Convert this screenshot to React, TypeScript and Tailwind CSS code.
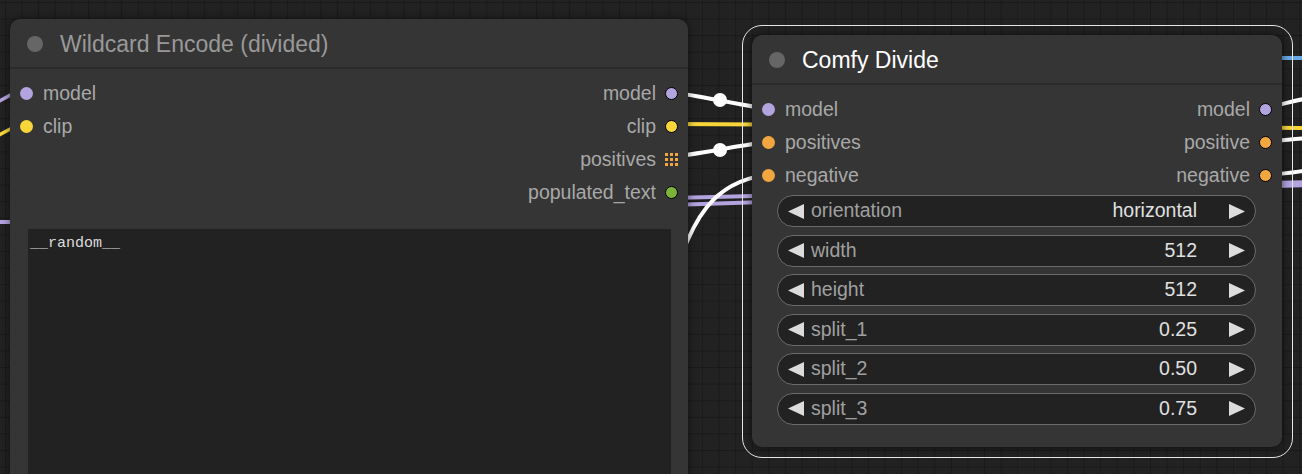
import type { ReactNode } from "react";

const DOT: Record<string, string> = {
  model: "bg-[#b3a3df]",
  clip: "bg-[#f8d63a]",
  cond: "bg-[#f2a63f]",
  text: "bg-[#7db33b]",
};

function InSlot({ label, kind }: { label: string; kind: string }) {
  return (
    <div className="flex h-[33px] items-center gap-[10px] pl-[10px]">
      <span className={`h-[13px] w-[13px] shrink-0 rounded-full ${DOT[kind]}`} />
      <span className="text-[19.5px] leading-none text-[#a8a8a8]">{label}</span>
    </div>
  );
}

function GridIcon() {
  return (
    <svg width="13" height="13" viewBox="0 0 13 13" className="shrink-0">
      {[0, 5, 10].map((y) =>
        [0, 5, 10].map((x) => <rect key={`${x}-${y}`} x={x} y={y} width="3" height="3" fill="#f2a63f" />)
      )}
    </svg>
  );
}

function OutSlot({ label, kind }: { label: string; kind: string }) {
  return (
    <div className="flex h-[33px] items-center justify-end gap-[9px] pr-[10px]">
      <span className="text-[19.5px] leading-none text-[#a8a8a8]">{label}</span>
      {kind === "list" ? (
        <GridIcon />
      ) : (
        <span className={`h-[13px] w-[13px] shrink-0 rounded-full border border-black ${DOT[kind]}`} />
      )}
    </div>
  );
}

function Title({ text, selected }: { text: string; selected?: boolean }) {
  return (
    <div className="flex h-[50px] items-center gap-[17px] border-b-2 border-[#2b2b2b] pl-[17px] pt-[2px]">
      <span className="h-[16px] w-[16px] rounded-full bg-[#666]" />
      <span className={`text-[23px] leading-none ${selected ? "text-white" : "text-[#999]"}`}>{text}</span>
    </div>
  );
}

function Arrow({ dir }: { dir: "l" | "r" }) {
  return (
    <svg width="16" height="15" viewBox="0 0 16 15" className="shrink-0">
      <polygon points={dir === "l" ? "0,7.5 16,0 16,15" : "16,7.5 0,0 0,15"} fill="#dcdcdc" />
    </svg>
  );
}

function Widget({ label, value }: { label: string; value: string }) {
  return (
    <div className="flex h-[32px] items-center rounded-full border border-[#6a6a6a] bg-[#222] pl-[10px] pr-[10px]">
      <Arrow dir="l" />
      <span className="ml-[7px] flex-1 text-[19.5px] leading-none text-[#a0a0a0]">{label}</span>
      <span className="mr-[32px] text-[19.5px] leading-none text-[#e0e0e0]">{value}</span>
      <Arrow dir="r" />
    </div>
  );
}

function Links(): ReactNode {
  return (
    <svg className="absolute inset-0" width="1302" height="474" viewBox="0 0 1302 474">
      <g fill="none" strokeLinecap="round">
        {/* into left node */}
        <path d="M -20 112 L 14 93" stroke="#b3a3df" strokeWidth="3.5" />
        <path d="M -20 145 L 14 127" stroke="#f8d63a" strokeWidth="3.5" />
        <path d="M -20 222 L 14 222" stroke="#b3a3df" strokeWidth="4" />
        {/* between nodes */}
        <path d="M 671 205 L 1310 185" stroke="#b3a3df" strokeWidth="4" />
        <path d="M 671 198 L 1310 182" stroke="#b3a3df" strokeWidth="4" />
        <path d="M 671 124 L 1310 128" stroke="#f8d63a" strokeWidth="4" />
        <path d="M 671 92 C 700 96, 740 105, 769 109" stroke="#fff" strokeWidth="4" />
        <circle cx="720" cy="100" r="7" fill="#fff" />
        <path d="M 671 157 C 700 154, 740 145, 769 142" stroke="#fff" strokeWidth="4" />
        <circle cx="720" cy="150" r="7" fill="#fff" />
        <path d="M 670 292 C 690 217, 715 180, 769 175" stroke="#fff" strokeWidth="4" />
        {/* out of right node */}
        <path d="M 1282 58 L 1310 58" stroke="#6aa8e8" strokeWidth="4" />
        <path d="M 1265 108 C 1285 104, 1295 100, 1310 98" stroke="#fff" strokeWidth="4" />
        <path d="M 1265 142 C 1285 140, 1295 139, 1310 138" stroke="#fff" strokeWidth="4" />
        <path d="M 1265 175 C 1285 174, 1295 172, 1310 170" stroke="#fff" strokeWidth="4" />
      </g>
    </svg>
  );
}

export default function App() {
  return (
    <div
      className="relative h-[474px] w-[1302px] overflow-hidden bg-[#222] bg-[linear-gradient(to_right,#1a1a1a_1px,transparent_1px),linear-gradient(to_bottom,#1a1a1a_1px,transparent_1px)] bg-[size:16.6px_16.6px] bg-[position:5px_2px] font-['Liberation_Sans',Arial,sans-serif]"
    >
      <Links />

      {/* Wildcard Encode (divided) */}
      <div className="absolute left-[10px] top-[19px] flex h-[480px] w-[678px] flex-col rounded-t-[10px] bg-[#353535] shadow-[0_0_8px_rgba(0,0,0,0.55)]">
        <Title text="Wildcard Encode (divided)" />
        <div className="grid grid-cols-2 pt-[8px]">
          <div className="flex flex-col">
            <InSlot label="model" kind="model" />
            <InSlot label="clip" kind="clip" />
          </div>
          <div className="flex flex-col">
            <OutSlot label="model" kind="model" />
            <OutSlot label="clip" kind="clip" />
            <OutSlot label="positives" kind="list" />
            <OutSlot label="populated_text" kind="text" />
          </div>
        </div>
        <div className="ml-[18px] mr-[17px] mt-[20px] flex-1 bg-[#222] px-[2px] pt-[6px] font-['Liberation_Mono',monospace] text-[15px] leading-[18px] text-[#ddd]">
          __random__
        </div>
      </div>

      {/* selection outline */}
      <div className="absolute left-[742px] top-[25px] h-[433px] w-[551px] rounded-[20px] border-[1.5px] border-[#e6e6e6]" />

      {/* Comfy Divide */}
      <div className="absolute left-[752px] top-[35px] flex h-[412px] w-[530px] flex-col rounded-[10px] bg-[#353535] shadow-[0_0_8px_rgba(0,0,0,0.6)]">
        <Title text="Comfy Divide" selected />
        <div className="grid grid-cols-2 pt-[8px]">
          <div className="flex flex-col">
            <InSlot label="model" kind="model" />
            <InSlot label="positives" kind="cond" />
            <InSlot label="negative" kind="cond" />
          </div>
          <div className="flex flex-col">
            <OutSlot label="model" kind="model" />
            <OutSlot label="positive" kind="cond" />
            <OutSlot label="negative" kind="cond" />
          </div>
        </div>
        <div className="ml-[25px] mr-[26px] mt-[3px] flex flex-col gap-[7.5px]">
          <Widget label="orientation" value="horizontal" />
          <Widget label="width" value="512" />
          <Widget label="height" value="512" />
          <Widget label="split_1" value="0.25" />
          <Widget label="split_2" value="0.50" />
          <Widget label="split_3" value="0.75" />
        </div>
      </div>
    </div>
  );
}
